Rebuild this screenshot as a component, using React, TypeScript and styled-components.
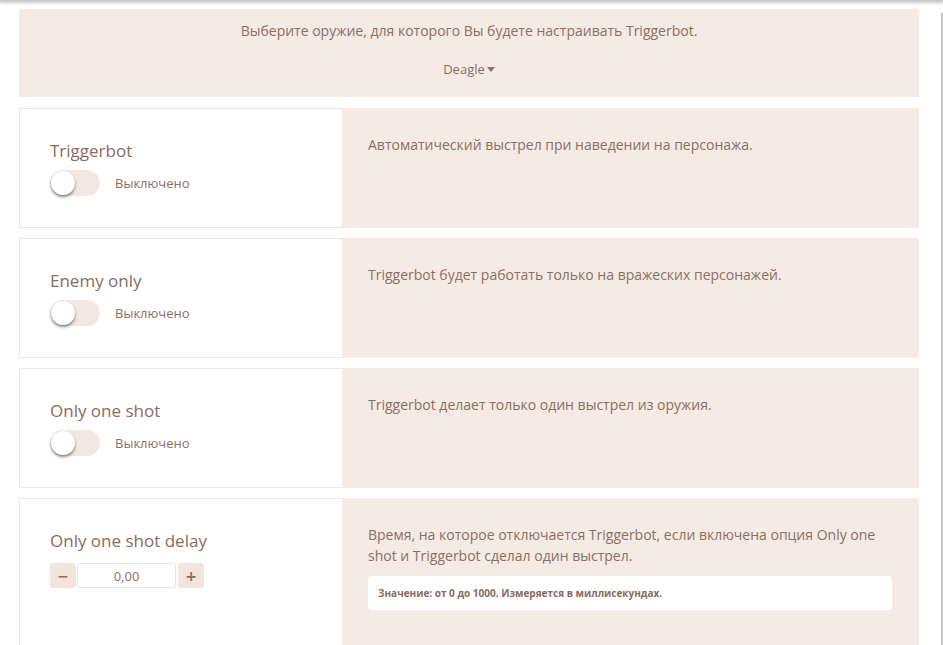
import React, {useState} from 'react';
import styled, {createGlobalStyle} from "styled-components";

const GlobalStyle = createGlobalStyle`
  html, body {
    margin: 0;
    padding: 0;
    background: #fff;
    overflow: hidden;
  }
  body {
    font-family: "Open Sans", "Noto Sans", sans-serif;
    color: #8c6f63;
  }
`

const Page = styled.div`
  position: relative;
  width: 943px;
  height: 645px;
  overflow: hidden;
  background: #fff;
`

const HeaderShadow = styled.div`
  height: 0;
  box-shadow: 0 0 4px 2px rgba(0, 0, 0, 0.35);
`

const ScrollEdge = styled.div`
  position: absolute;
  right: 0;
  top: 13px;
  bottom: 0;
  width: 2px;
  background: #c4c4c4;
`

const Content = styled.div`
  width: 900px;
  margin-left: 19px;
  padding-top: 9px;
  display: flex;
  flex-direction: column;
  gap: 10px;
`

const WeaponPanel = styled.div`
  background: #f5eae4;
  height: 88px;
  margin-bottom: 1px;
  display: flex;
  flex-direction: column;
  align-items: center;
  font-size: 14px;
`

const PanelText = styled.div`
  margin-top: 12px;
  line-height: 20px;
`

const Dropdown = styled.div`
  margin-top: 18px;
  font-size: 13px;
  line-height: 20px;
  display: flex;
  align-items: center;
  gap: 2px;
  cursor: pointer;
`

const Caret = styled.span`
  width: 0;
  height: 0;
  border-left: 4px solid transparent;
  border-right: 4px solid transparent;
  border-top: 5px solid #8c6f63;
  margin-top: 1px;
`

const Card = styled.div<{ $tall?: boolean }>`
  display: flex;
  height: ${p => p.$tall ? 160 : 120}px;
`

const CardLeft = styled.div`
  box-sizing: border-box;
  width: 323px;
  border: 1px solid #ede8e5;
  border-right: none;
  background: #fff;
  padding: 31px 0 0 30px;
`

const CardRight = styled.div`
  flex: 1;
  background: #f5eae4;
  padding: 26px 26px 0 26px;
  font-size: 14px;
  line-height: 21px;
`

const Title = styled.div`
  font-size: 17px;
  line-height: 22px;
  color: #8a6c60;
`

const ToggleRow = styled.div`
  display: flex;
  align-items: center;
  margin-top: 8px;
  gap: 15px;
`

const Track = styled.div`
  position: relative;
  width: 50px;
  height: 26px;
  border-radius: 13px;
  background: #f3e7e1;
  cursor: pointer;
`

const Knob = styled.div<{ $on: boolean }>`
  position: absolute;
  top: 1px;
  left: ${p => p.$on ? 25 : 1}px;
  width: 24px;
  height: 24px;
  border-radius: 50%;
  background: #fff;
  box-shadow: 0 2px 3px rgba(0, 0, 0, 0.45);
`

const ToggleLabel = styled.span`
  font-size: 13px;
`

const Stepper = styled.div`
  display: flex;
  align-items: center;
  margin-top: 11px;
  gap: 1px;
`

const StepButton = styled.button`
  width: 26px;
  height: 25px;
  border: none;
  border-radius: 3px;
  background: #f3e5de;
  color: #8a6c60;
  font-family: "DejaVu Sans", sans-serif;
  font-weight: bold;
  font-size: 14px;
  padding: 0;
  display: flex;
  align-items: center;
  justify-content: center;
`

const StepInput = styled.input`
  box-sizing: border-box;
  width: 99px;
  height: 25px;
  border: 1px solid #efe6e1;
  border-radius: 3px;
  text-align: center;
  font-family: "Open Sans", sans-serif;
  font-size: 13px;
  color: #8c6f63;
  outline: none;
  margin-right: 1px;
`

const Hint = styled.div`
  margin-top: 10px;
  background: #fff;
  border-radius: 3px;
  height: 34px;
  width: 524px;
  display: flex;
  align-items: center;
  padding-left: 10px;
  box-sizing: border-box;
  font-size: 10px;
  font-weight: bold;
  color: #8a6c60;
`

const Toggle: React.FC = () => {
    const [on, setOn] = useState(false)
    return (
        <ToggleRow>
            <Track onClick={() => setOn(!on)}>
                <Knob $on={on}/>
            </Track>
            <ToggleLabel>{on ? 'Включено' : 'Выключено'}</ToggleLabel>
        </ToggleRow>
    )
}

const options = [
    {title: 'Triggerbot', text: 'Автоматический выстрел при наведении на персонажа.'},
    {title: 'Enemy only', text: 'Triggerbot будет работать только на вражеских персонажей.'},
    {title: 'Only one shot', text: 'Triggerbot делает только один выстрел из оружия.'},
]

const App: React.FC = () => {
    const [delay, setDelay] = useState(0)

    return (
        <Page>
            <GlobalStyle/>
            <HeaderShadow/>
            <ScrollEdge/>
            <Content>
                <WeaponPanel>
                    <PanelText>Выберите оружие, для которого Вы будете настраивать Triggerbot.</PanelText>
                    <Dropdown>Deagle<Caret/></Dropdown>
                </WeaponPanel>

                {options.map(o => (
                    <Card key={o.title}>
                        <CardLeft>
                            <Title>{o.title}</Title>
                            <Toggle/>
                        </CardLeft>
                        <CardRight>{o.text}</CardRight>
                    </Card>
                ))}

                <Card $tall>
                    <CardLeft>
                        <Title>Only one shot delay</Title>
                        <Stepper>
                            <StepButton onClick={() => setDelay(Math.max(0, delay - 1))}>−</StepButton>
                            <StepInput readOnly value={delay.toFixed(2).replace('.', ',')}/>
                            <StepButton onClick={() => setDelay(Math.min(1000, delay + 1))}>+</StepButton>
                        </Stepper>
                    </CardLeft>
                    <CardRight>
                        Время, на которое отключается Triggerbot, если включена опция Only one shot и Triggerbot сделал один выстрел.
                        <Hint>Значение: от 0 до 1000. Измеряется в миллисекундах.</Hint>
                    </CardRight>
                </Card>
            </Content>
        </Page>
    );
}

export default App;
